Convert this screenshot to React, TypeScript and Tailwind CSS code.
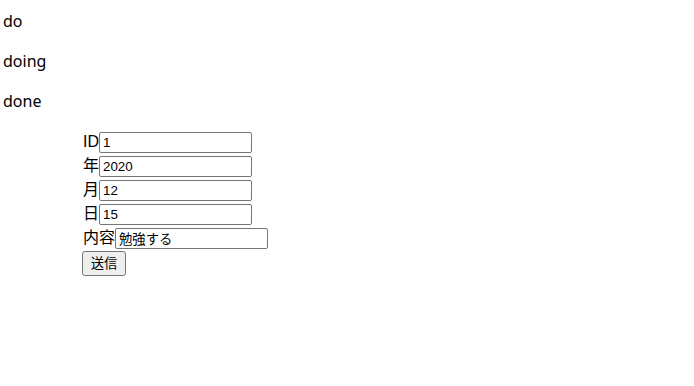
const fields = [
  { label: "ID", value: "1", w: "w-[153px]" },
  { label: "年", value: "2020", w: "w-[153px]" },
  { label: "月", value: "12", w: "w-[153px]" },
  { label: "日", value: "15", w: "w-[153px]" },
  { label: "内容", value: "勉強する", w: "w-[153px]" },
];

export default function App() {
  return (
    <div className="min-h-[386px] bg-white text-black text-[16px] font-['Noto_Sans','Noto_Sans_CJK_JP',sans-serif]">
      <div className="pt-[9px] pl-[3px] flex flex-col gap-[16px] leading-[24px]">
        <p>do</p>
        <p>doing</p>
        <p>done</p>
      </div>
      <form className="mt-[17px] pl-[83px] flex flex-col items-start">
        {fields.map((f) => (
          <label key={f.label} className="flex items-center h-[24px] leading-[24px]">
            <span className="font-['Liberation_Sans','Noto_Sans_CJK_JP',sans-serif]">{f.label}</span>
            <input
              defaultValue={f.value}
              className={`${f.w} h-[21px] border border-[#767676] rounded-[2px] px-[3px] text-[13.33px] leading-[15px] outline-none font-['Liberation_Sans','Noto_Sans_CJK_JP',sans-serif]`}
            />
          </label>
        ))}
        <button
          type="button"
          className="mt-[1px] -ml-[1px] w-[44px] h-[25px] border border-[#767676] rounded-[3px] bg-[#efefef] text-[13.33px] leading-none font-['Liberation_Sans','Noto_Sans_CJK_JP',sans-serif]"
        >
          送信
        </button>
      </form>
    </div>
  );
}
